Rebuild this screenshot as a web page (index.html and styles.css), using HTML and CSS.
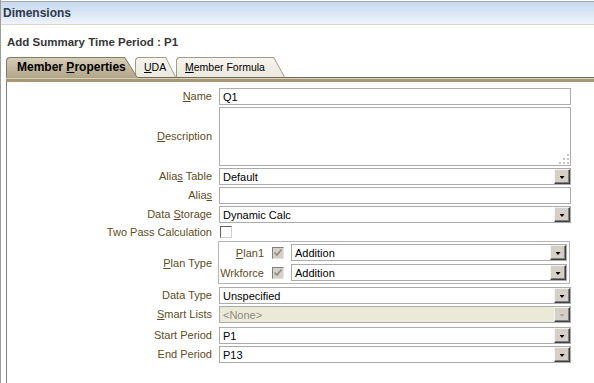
FILE: index.html
```html
<!DOCTYPE html>
<html lang="en">
<head>
    <meta charset="UTF-8">
    <meta name="viewport" content="width=device-width, initial-scale=1.0">
    <title>Dimensions - Add Summary Time Period</title>
    <link rel="stylesheet" href="styles.css">
</head>
<body>
    <div class="app">
        <div class="titlebar">Dimensions</div>
        <div class="page">
            <h1 class="page-title">Add Summary Time Period : P1</h1>
            <div class="tabs">
                <div class="tab tab-active"><div class="tab-face">Member <u>P</u>roperties</div></div>
                <div class="tab tab-uda"><div class="tab-face"><u>U</u>DA</div></div>
                <div class="tab tab-formula"><div class="tab-face"><u>M</u>ember Formula</div></div>
            </div>
            <div class="tab-rule"></div>
            <div class="panel">
                <div class="form">
                    <label class="lbl"><u>N</u>ame</label>
                    <div class="field"><span class="val">Q1</span></div>

                    <label class="lbl"><u>D</u>escription</label>
                    <div class="field textarea">
                        <svg class="grip" width="10" height="10" viewBox="0 0 10 10">
                            <rect x="8" y="0" width="2" height="2"/>
                            <rect x="4" y="4" width="2" height="2"/>
                            <rect x="8" y="4" width="2" height="2"/>
                            <rect x="0" y="8" width="2" height="2"/>
                            <rect x="4" y="8" width="2" height="2"/>
                            <rect x="8" y="8" width="2" height="2"/>
                        </svg>
                    </div>

                    <label class="lbl">Alia<u>s</u> Table</label>
                    <div class="field select"><span class="val">Default</span><span class="drop"></span></div>

                    <label class="lbl">Alia<u>s</u></label>
                    <div class="field"><span class="val"></span></div>

                    <label class="lbl">Data <u>S</u>torage</label>
                    <div class="field select"><span class="val">Dynamic Calc</span><span class="drop"></span></div>

                    <label class="lbl">Two Pass Calculation</label>
                    <div class="check-cell"><span class="check"></span></div>

                    <label class="lbl"><u>P</u>lan Type</label>
                    <div class="plan-box">
                        <span class="sublbl"><u>P</u>lan1</span>
                        <span class="check checked">
                            <svg width="10" height="10" viewBox="0 0 10 10"><polyline points="1.5,4.5 4,7 8.5,1.5"/></svg>
                        </span>
                        <div class="field select"><span class="val">Addition</span><span class="drop"></span></div>

                        <span class="sublbl">Wrkforce</span>
                        <span class="check checked">
                            <svg width="10" height="10" viewBox="0 0 10 10"><polyline points="1.5,4.5 4,7 8.5,1.5"/></svg>
                        </span>
                        <div class="field select"><span class="val">Addition</span><span class="drop"></span></div>
                    </div>

                    <label class="lbl">Data Type</label>
                    <div class="field select"><span class="val">Unspecified</span><span class="drop"></span></div>

                    <label class="lbl lbl-top"><u>S</u>mart Lists</label>
                    <div class="field select disabled"><span class="val">&lt;None&gt;</span><span class="drop"></span></div>

                    <label class="lbl">Start Period</label>
                    <div class="field select"><span class="val">P1</span><span class="drop"></span></div>

                    <label class="lbl">End Period</label>
                    <div class="field select"><span class="val">P13</span><span class="drop"></span></div>
                </div>
            </div>
        </div>
    </div>
</body>
</html>
```

FILE: styles.css
```css
* {
    box-sizing: border-box;
}
body {
    margin: 0;
    background: #fff;
    color: #000;
    font-family: "Liberation Sans", Arial, sans-serif;
    font-size: 11px;
}
.app {
    min-height: 100vh;
    display: flex;
    flex-direction: column;
    border-left: 1px solid #9d9d95;
    padding-top: 1px;
}
.titlebar {
    height: 24px;
    padding-left: 2px;
    border-top: 1px solid #9ea7b3;
    border-bottom: 1px solid #d8d5c2;
    background: linear-gradient(#c8d8ee, #eef3fb);
    color: #2e3b4b;
    font-size: 12px;
    font-weight: bold;
    line-height: 22px;
}
.page {
    flex: 1;
    display: flex;
    flex-direction: column;
    padding: 10px 0 0 5px;
}
.page-title {
    margin: 0 0 8px 1px;
    color: #363636;
    font-size: 11.5px;
    line-height: 14px;
}

/* tabs */
.tabs {
    display: flex;
    align-items: flex-end;
    height: 20px;
}
.tab {
    position: relative;
    height: 20px;
    background: #a49c88;
    clip-path: polygon(0 3px, 1px 1px, 3px 0, calc(100% - var(--s)) 0, 100% 100%, 0 100%);
}
.tab-face {
    height: calc(100% - 1px);
    margin: 1px 1px 0 1px;
    padding-left: 7px;
    background: linear-gradient(#f6f4ee, #ebe8dd);
    line-height: 18px;
    font-size: 10.5px;
    white-space: nowrap;
    clip-path: polygon(0 2px, 2px 0, calc(100% - var(--s) + 0.5px) 0, 100% 100%, 0 100%);
}
.tab-active {
    --s: 13px;
    width: 132px;
    height: 21px;
    margin-bottom: -1px;
    z-index: 2;
    background: #857a62;
}
.tab-active .tab-face {
    padding-left: 10px;
    background: linear-gradient(#d6cdb8, #b1a588);
    font-size: 12px;
    font-weight: bold;
    line-height: 19px;
}
.tab-uda {
    --s: 10px;
    width: 41px;
    margin-left: -3px;
    z-index: 1;
}
.tab-uda .tab-face {
    padding-left: 8px;
}
.tab-formula {
    --s: 11px;
    width: 109px;
}
.tab-formula .tab-face {
    padding-left: 8px;
}
.tab-rule {
    height: 5px;
    border-top: 1px solid #6f6c60;
    background: linear-gradient(#d8d2be 0 1px, #a79574 1px);
}

/* form panel */
.panel {
    flex: 1;
    border-left: 1px solid #808080;
    padding-top: 6px;
}
.form {
    display: grid;
    grid-template-columns: 205px 352px;
    grid-template-rows: 17px 59px 17px 17px 17px 14px 44px 17px 19px 17px 17px;
    column-gap: 7px;
    row-gap: 2px;
}
.lbl {
    justify-self: end;
    align-self: center;
    color: #5e4c1c;
    line-height: 13px;
    white-space: nowrap;
}
.lbl-top {
    align-self: start;
    margin-top: 2px;
}
.field {
    position: relative;
    display: flex;
    align-items: center;
    height: 17px;
    border: 1px solid #ababab;
    background: #fff;
}
.field .val {
    flex: 1;
    padding-left: 3px;
    white-space: nowrap;
}
.textarea {
    height: 59px;
}
.grip {
    position: absolute;
    right: 1px;
    bottom: 1px;
    fill: #c4c4c4;
}
.drop {
    align-self: stretch;
    display: flex;
    justify-content: center;
    align-items: flex-start;
    width: 16px;
    padding-top: 6px;
    border: 1px solid;
    border-color: #f4f3ef #404040 #404040 #f4f3ef;
    box-shadow: inset -1px -1px #808080;
    background: #d4d0c8;
}
.drop::after {
    content: "";
    width: 5px;
    height: 3px;
    background: #000;
    clip-path: polygon(0 0, 100% 0, 50% 100%);
}
.disabled {
    background: #ebe9d8;
}
.disabled .val {
    color: #8e8d80;
}
.disabled .drop::after {
    background: #a8a8a8;
}

/* checkboxes */
.check-cell {
    display: flex;
    align-items: center;
    padding-left: 1px;
}
.check {
    display: flex;
    align-items: center;
    justify-content: center;
    width: 12px;
    height: 12px;
    border: 1px solid;
    border-color: #5f5f5f #d0d0d0 #d0d0d0 #5f5f5f;
    background: #fff;
}
.check.checked {
    border-color: #808080 #e4e2da #e4e2da #808080;
    background: #d4d0c8;
}
.check svg {
    fill: none;
    stroke: #8a8a8a;
    stroke-width: 1.6;
}

/* plan type group */
.plan-box {
    display: grid;
    grid-template-columns: 46px 12px 276px;
    grid-auto-rows: 17px;
    column-gap: 7px;
    row-gap: 3px;
    align-self: start;
    align-items: center;
    width: 352px;
    height: 43px;
    margin-left: -1px;
    padding: 2px 2px 2px 0;
    border: 1px solid #b4b4b4;
}
.sublbl {
    justify-self: end;
    padding-right: 1px;
    color: #5e4c1c;
    white-space: nowrap;
}
```
